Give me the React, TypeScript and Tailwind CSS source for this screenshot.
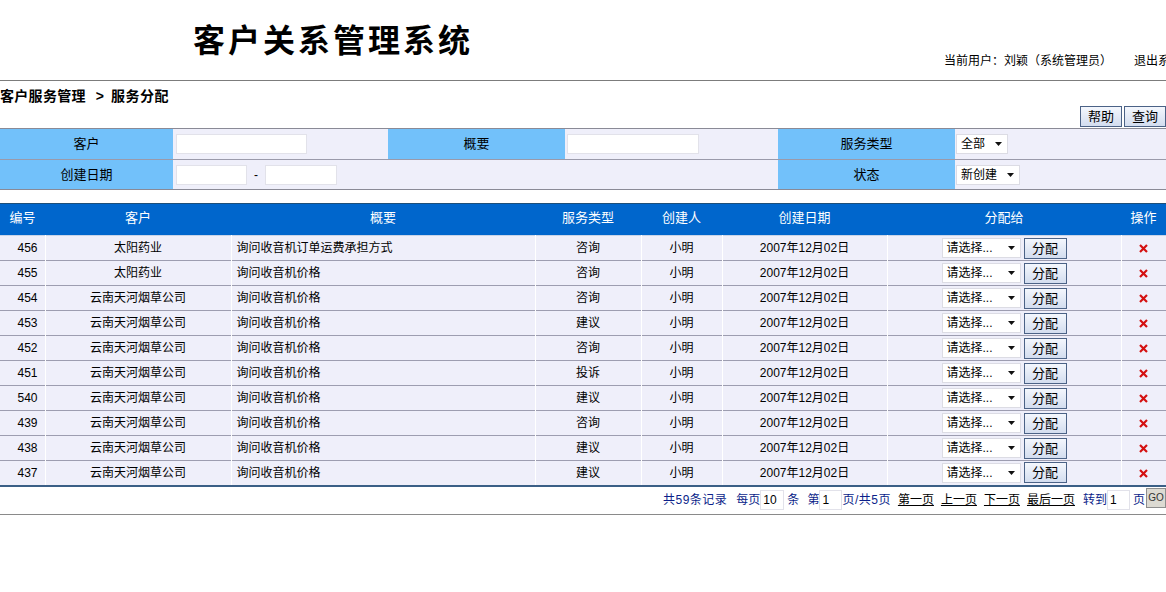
import React from "react";

const rows = [
  { id: "456", customer: "太阳药业", summary: "询问收音机订单运费承担方式", type: "咨询" },
  { id: "455", customer: "太阳药业", summary: "询问收音机价格", type: "咨询" },
  { id: "454", customer: "云南天河烟草公司", summary: "询问收音机价格", type: "咨询" },
  { id: "453", customer: "云南天河烟草公司", summary: "询问收音机价格", type: "建议" },
  { id: "452", customer: "云南天河烟草公司", summary: "询问收音机价格", type: "咨询" },
  { id: "451", customer: "云南天河烟草公司", summary: "询问收音机价格", type: "投诉" },
  { id: "540", customer: "云南天河烟草公司", summary: "询问收音机价格", type: "建议" },
  { id: "439", customer: "云南天河烟草公司", summary: "询问收音机价格", type: "咨询" },
  { id: "438", customer: "云南天河烟草公司", summary: "询问收音机价格", type: "建议" },
  { id: "437", customer: "云南天河烟草公司", summary: "询问收音机价格", type: "建议" },
];

const font = "font-['Liberation_Sans','Noto_Sans_CJK_SC',sans-serif]";

function Caret() {
  return (
    <svg width="7" height="4" viewBox="0 0 7 4" className="shrink-0">
      <path d="M0 0h7L3.5 4z" fill="#111" />
    </svg>
  );
}

function FakeSelect({ label, w }: { label: string; w: string }) {
  return (
    <div className={`inline-flex h-[20px] items-center justify-between bg-white border border-[#dcdce4] pl-[4px] pr-[5px] text-[12px] text-black ${w}`}>
      <span className="leading-none">{label}</span>
      <Caret />
    </div>
  );
}

function BlueButton({ children, w }: { children: React.ReactNode; w: string }) {
  return (
    <button className={`h-[21px] ${w} border border-[#4b6286] bg-gradient-to-b from-[#f4f7fd] to-[#d3ddef] text-[13px] leading-none text-black`}>
      {children}
    </button>
  );
}

function RedX() {
  return (
    <svg width="9" height="9" viewBox="0 0 9 9" className="inline-block">
      <path d="M1 1l7 7M8 1L1 8" stroke="#d41010" strokeWidth="2.2" />
    </svg>
  );
}

function SmallInput({ value, w }: { value?: string; w: string }) {
  return (
    <div className={`h-[20px] ${w} bg-white border border-[#e2e2ea] text-[12px] leading-[18px] pl-[2px] text-black`}>
      {value}
    </div>
  );
}

export default function App() {
  return (
    <div className={`w-[1166px] h-[592px] overflow-hidden bg-white ${font} text-black`}>
      {/* top banner */}
      <div className="h-[80px] flex whitespace-nowrap">
        <h1 className="ml-[193px] mt-[19px] h-[38px] text-[32px] leading-[38px] font-bold tracking-[3px] font-['Noto_Sans_CJK_SC',sans-serif]">
          客户关系管理系统
        </h1>
        <div className="ml-[471px] self-end mb-[12px] text-[12px] leading-[14px] flex">
          <span>当前用户：刘颖（系统管理员）</span>
          <span className="ml-[22px]">退出系统</span>
        </div>
      </div>
      <div className="h-px bg-[#7c7c7c]" />

      {/* breadcrumb */}
      <div className="h-[25px] pt-[7px] text-[14px] leading-[16px] font-bold whitespace-nowrap flex">
        <span className="tracking-[0.3px]">客户服务管理</span>
        <span className="ml-[10px]">&gt;</span>
        <span className="ml-[7px] tracking-[0.5px]">服务分配</span>
      </div>

      <div className="flex justify-end gap-[2px] h-[22px]">
        <BlueButton w="w-[42px]">帮助</BlueButton>
        <BlueButton w="w-[42px]">查询</BlueButton>
      </div>

      {/* search form */}
      <div className="border-t border-[#8a8a96] text-[13px]">
        <div className="flex h-[31px] border-b border-[#9a9aaa]">
          <div className="w-[173px] bg-[#72c1fa] flex items-center justify-center">客户</div>
          <div className="w-[215px] bg-[#efeffa] flex items-center pl-[3px]">
            <SmallInput w="w-[131px]" />
          </div>
          <div className="w-[177px] bg-[#72c1fa] flex items-center justify-center">概要</div>
          <div className="w-[213px] bg-[#efeffa] flex items-center pl-[2px]">
            <SmallInput w="w-[132px]" />
          </div>
          <div className="w-[177px] bg-[#72c1fa] flex items-center justify-center">服务类型</div>
          <div className="flex-1 bg-[#efeffa] flex items-center pl-[1px]">
            <FakeSelect label="全部" w="w-[52px]" />
          </div>
        </div>
        <div className="flex h-[30px] border-b border-[#8a8a96]">
          <div className="w-[173px] bg-[#72c1fa] flex items-center justify-center">创建日期</div>
          <div className="w-[605px] bg-[#efeffa] flex items-center pl-[3px]">
            <SmallInput w="w-[71px]" />
            <span className="mx-[7px] text-[12px]">-</span>
            <SmallInput w="w-[72px]" />
          </div>
          <div className="w-[177px] bg-[#72c1fa] flex items-center justify-center">状态</div>
          <div className="flex-1 bg-[#efeffa] flex items-center pl-[1px]">
            <FakeSelect label="新创建" w="w-[64px]" />
          </div>
        </div>
      </div>

      {/* list table */}
      <table className="mt-[13px] w-[1166px] table-fixed border-collapse border-t border-[#1d4f7a] text-[12px]">
        <colgroup>
          <col className="w-[45px]" />
          <col className="w-[186px]" />
          <col className="w-[304px]" />
          <col className="w-[106px]" />
          <col className="w-[81px]" />
          <col className="w-[165px]" />
          <col className="w-[234px]" />
          <col className="w-[45px]" />
        </colgroup>
        <thead>
          <tr className="h-[32px] bg-[#0066cc] text-white text-[13px] border-b border-[#c8d4e8]">
            {["编号", "客户", "概要", "服务类型", "创建人", "创建日期", "分配给", "操作"].map((h) => (
              <th key={h} className="font-normal pb-[4px] text-center">{h}</th>
            ))}
          </tr>
        </thead>
        <tbody>
          {rows.map((r, i) => (
            <tr
              key={r.id}
              className={`h-[25px] bg-[#efeffa] border-b ${i === rows.length - 1 ? "border-[#3b5f86] border-b-2" : "border-[#9d9db0]"}`}
            >
              <td className="text-right pr-[7px] border-r border-white">{r.id}</td>
              <td className="text-center border-r border-white">{r.customer}</td>
              <td className="text-left pl-[5px] border-r border-white">{r.summary}</td>
              <td className="text-center border-r border-white">{r.type}</td>
              <td className="text-center border-r border-white">小明</td>
              <td className="text-center border-r border-white">2007年12月02日</td>
              <td className="border-r border-white">
                <div className="flex items-center justify-center gap-[3px]">
                  <FakeSelect label="请选择..." w="w-[79px]" />
                  <BlueButton w="w-[43px]">分配</BlueButton>
                </div>
              </td>
              <td className="text-center">
                <RedX />
              </td>
            </tr>
          ))}
        </tbody>
      </table>

      {/* pager */}
      <div className="h-[28px] flex items-center justify-end text-[12px] text-[#0c1f8a] whitespace-nowrap border-b border-[#8a8a8a]">
        <span className="tracking-[0.5px]">共59条记录</span>
        <span className="ml-[9px]">每页</span>
        <SmallInput value="10" w="w-[24px]" />
        <span className="ml-[3px]">条</span>
        <span className="ml-[8px]">第</span>
        <SmallInput value="1" w="w-[23px]" />
        <span className="tracking-[0.5px]">页/共5页</span>
        <a className="ml-[7px] text-black underline">第一页</a>
        <a className="ml-[7px] text-black underline">上一页</a>
        <a className="ml-[7px] text-black underline">下一页</a>
        <a className="ml-[7px] text-black underline">最后一页</a>
        <span className="ml-[8px]">转到</span>
        <SmallInput value="1" w="w-[23px]" />
        <span className="ml-[3px]">页</span>
        <button className="ml-[1px] self-start mt-[1px] h-[20px] w-[20px] bg-[#dcdad2] border border-[#8e8e8e] text-[10px] leading-none text-[#333]">
          GO
        </button>
      </div>
    </div>
  );
}
